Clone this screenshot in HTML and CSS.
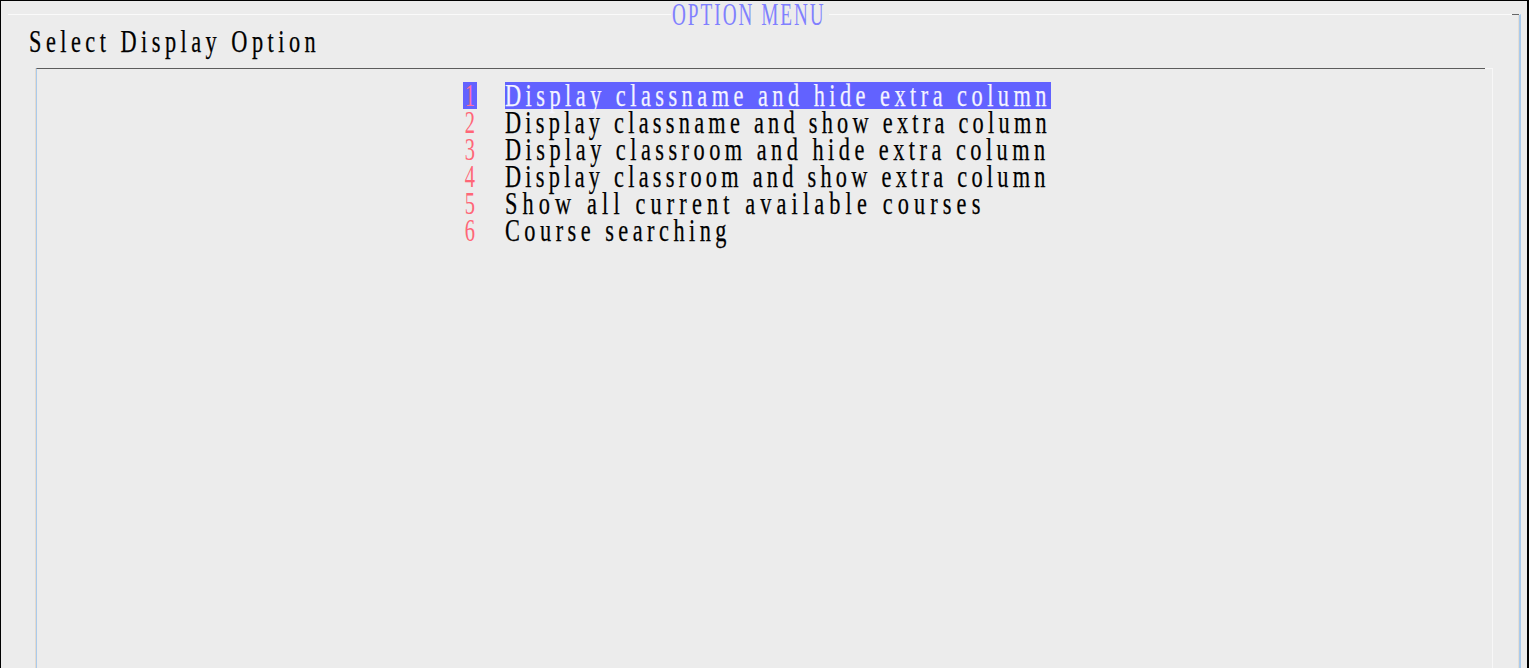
FILE: index.html
```html
<!DOCTYPE html>
<html>
<head>
<meta charset="utf-8">
<title>OPTION MENU</title>
<link rel="stylesheet" href="styles.css">
</head>
<body>
<div class="screen">
  <div class="frame">
    <div class="legend"><span class="g g-title">OPTION MENU</span></div>
    <div class="heading"><span class="g">Select Display Option</span></div>
    <div class="box">
      <div class="row">
        <div class="num sel"><span class="g">1</span></div>
        <div class="txt sel"><span class="g">Display classname and hide extra column</span></div>
      </div>
      <div class="row">
        <div class="num"><span class="g">2</span></div>
        <div class="txt"><span class="g g-tight">Display classname and show extra column</span></div>
      </div>
      <div class="row">
        <div class="num"><span class="g">3</span></div>
        <div class="txt"><span class="g">Display classroom and hide extra column</span></div>
      </div>
      <div class="row">
        <div class="num"><span class="g">4</span></div>
        <div class="txt"><span class="g g-tight">Display classroom and show extra column</span></div>
      </div>
      <div class="row">
        <div class="num"><span class="g">5</span></div>
        <div class="txt"><span class="g g-wide">Show all current available courses</span></div>
      </div>
      <div class="row">
        <div class="num"><span class="g">6</span></div>
        <div class="txt"><span class="g">Course searching</span></div>
      </div>
    </div>
  </div>
</div>
</body>
</html>
```

FILE: styles.css
```css
html, body {
  margin: 0;
  padding: 0;
  background: #ececec;
}

body {
  font-family: "Liberation Serif", "Times New Roman", serif;
  font-size: 31px;
  line-height: 27px;
  color: #000;
}

.screen {
  position: relative;
  box-sizing: border-box;
  width: 1529px;
  height: 668px;
  overflow: hidden;
  border-top: 1px solid #000;
  border-left: 1px solid #000;
  border-right: 2px solid #000;
  background: #ececec;
}

.screen::after {
  content: "";
  position: absolute;
  top: -1px;
  right: -2px;
  width: 2px;
  height: 28px;
  background: #6a6aff;
}

.frame {
  position: relative;
  box-sizing: border-box;
  width: 1513px;
  height: 700px;
  margin: 13px 0 0 7px;
  border-top: 1px solid #fafafa;
  border-right: 2px solid #a9caec;
  box-shadow: -1px 0 0 #e6ded4 inset;
}

.frame::before {
  content: "";
  position: absolute;
  top: -1px;
  right: 0;
  width: 7px;
  height: 1px;
  background: #666;
}

.g {
  display: inline-block;
  white-space: nowrap;
  transform: scaleX(0.72);
  transform-origin: 0 0;
  letter-spacing: 6.22px;
  -webkit-text-stroke: 0.25px currentColor;
}

.g-tight {
  letter-spacing: 5.91px;
}

.g-wide {
  letter-spacing: 7.12px;
}

.g-title {
  transform: scaleX(0.62);
  letter-spacing: 3.2px;
  -webkit-text-stroke: 0;
}

.legend {
  position: absolute;
  top: -14px;
  left: 663px;
  width: 157px;
  height: 27px;
  padding-left: 1px;
  background: #ececec;
  color: #8080ff;
  white-space: nowrap;
}

.heading {
  height: 27px;
  margin-top: 13px;
  padding-left: 21px;
  white-space: nowrap;
}

.box {
  position: relative;
  box-sizing: border-box;
  width: 1457px;
  height: 640px;
  margin: 13px 0 0 28px;
  padding: 13px 0 0 426px;
  border-top: 1px solid #5c5c5c;
  border-left: 1px solid #a9caec;
  border-right: 1px solid #f7f7f7;
  box-shadow: -1px 0 0 #e6dacd;
}

.box::after {
  content: "";
  position: absolute;
  top: -1px;
  right: -1px;
  width: 8px;
  height: 1px;
  background: #f7f7f7;
}

.row {
  display: flex;
  height: 27px;
  gap: 28px;
  white-space: nowrap;
}

.num {
  display: flex;
  justify-content: center;
  width: 14px;
  height: 27px;
  color: #ff6677;
}

.num .g {
  transform: scaleX(0.66);
  transform-origin: 50% 0;
  letter-spacing: 0;
  -webkit-text-stroke: 0;
}

.num.sel {
  background: #6262ff;
  color: #ff6f9c;
}

.txt {
  height: 27px;
}

.txt.sel {
  width: 546px;
  background: #6262ff;
  color: #f4f4ff;
}
```
